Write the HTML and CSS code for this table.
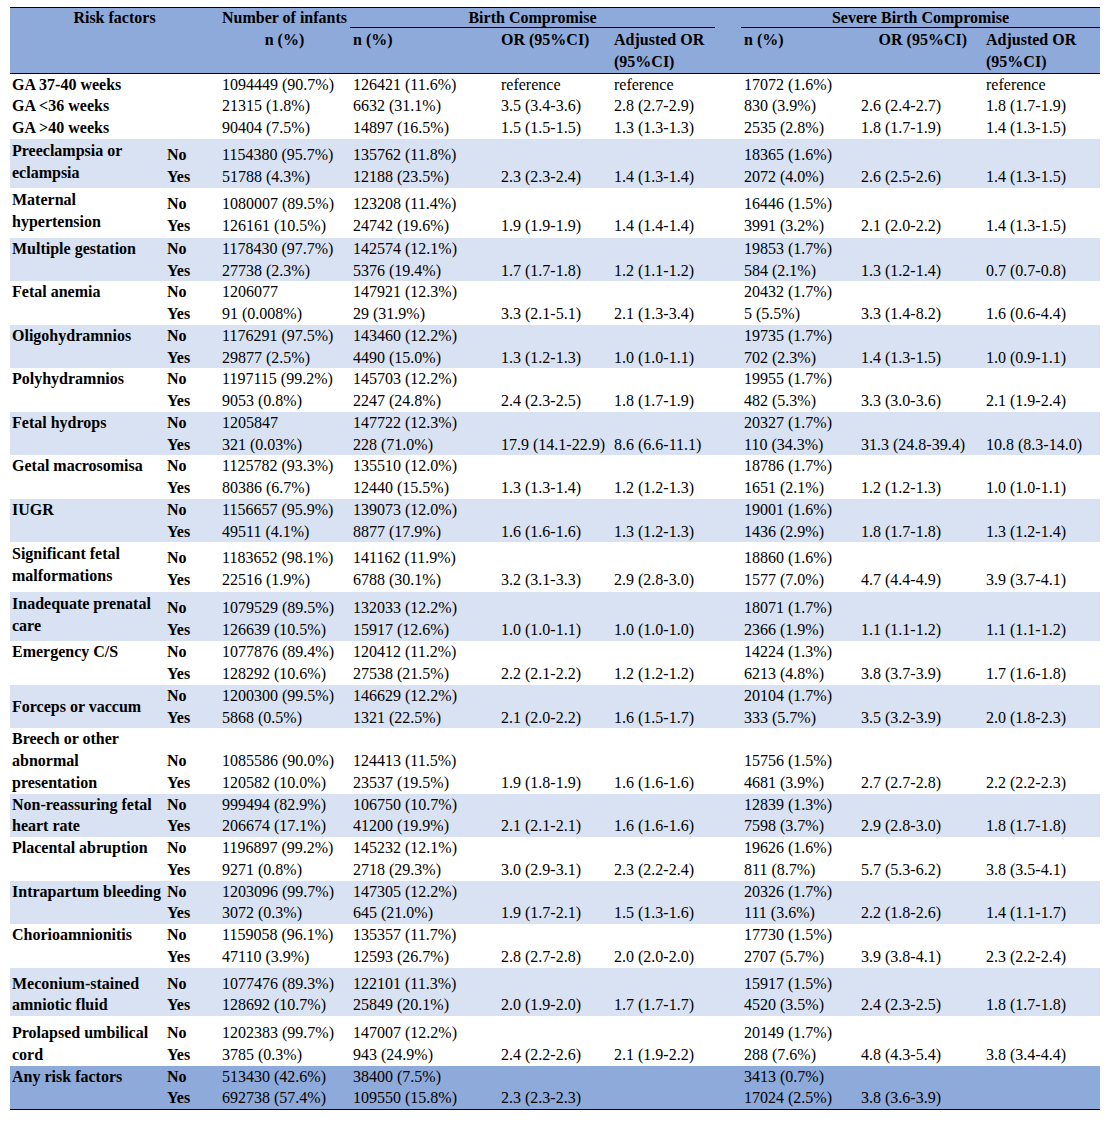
FILE: index.html
```html
<!DOCTYPE html>
<html lang="en">
<head>
<meta charset="utf-8">
<title>Risk factors and birth compromise</title>
<link rel="stylesheet" href="styles.css">
</head>
<body>
<table class="rt">
  <colgroup>
    <col class="c-label"><col class="c-ny"><col class="c-num"><col class="c-n"><col class="c-or"><col class="c-adj"><col class="c-gap"><col class="c-sn"><col class="c-sor"><col class="c-sadj">
  </colgroup>
  <thead>
    <tr class="h1">
      <th colspan="2" class="center">Risk factors</th>
      <th class="left">Number of infants</th>
      <th colspan="3" class="grp">Birth Compromise</th>
      <th></th>
      <th colspan="3" class="grp">Severe Birth Compromise</th>
    </tr>
    <tr class="h2">
      <th colspan="2"></th>
      <th class="center">n (%)</th>
      <th>n (%)</th>
      <th>OR (95%CI)</th>
      <th>Adjusted OR<br>(95%CI)</th>
      <th></th>
      <th>n (%)</th>
      <th class="right">OR (95%CI)</th>
      <th>Adjusted OR<br>(95%CI)</th>
    </tr>
  </thead>
  <tbody>
    <tr class="ga first">
      <td class="lbl">GA 37-40 weeks</td><td></td><td>1094449 (90.7%)</td><td>126421 (11.6%)</td><td>reference</td><td>reference</td><td></td><td>17072 (1.6%)</td><td></td><td>reference</td>
    </tr>
    <tr class="ga">
      <td class="lbl">GA &lt;36 weeks</td><td></td><td>21315 (1.8%)</td><td>6632 (31.1%)</td><td>3.5 (3.4-3.6)</td><td>2.8 (2.7-2.9)</td><td></td><td>830 (3.9%)</td><td>2.6 (2.4-2.7)</td><td>1.8 (1.7-1.9)</td>
    </tr>
    <tr class="ga last">
      <td class="lbl">GA &gt;40 weeks</td><td></td><td>90404 (7.5%)</td><td>14897 (16.5%)</td><td>1.5 (1.5-1.5)</td><td>1.3 (1.3-1.3)</td><td></td><td>2535 (2.8%)</td><td>1.8 (1.7-1.9)</td><td>1.4 (1.3-1.5)</td>
    </tr>

    <tr class="band tall">
      <td class="lbl">Preeclampsia or<br>eclampsia</td><td class="ny">No<br>Yes</td><td>1154380 (95.7%)<br>51788 (4.3%)</td><td>135762 (11.8%)<br>12188 (23.5%)</td><td><br>2.3 (2.3-2.4)</td><td><br>1.4 (1.3-1.4)</td><td></td><td>18365 (1.6%)<br>2072 (4.0%)</td><td><br>2.6 (2.5-2.6)</td><td><br>1.4 (1.3-1.5)</td>
    </tr>
    <tr class="tall">
      <td class="lbl">Maternal<br>hypertension</td><td class="ny">No<br>Yes</td><td>1080007 (89.5%)<br>126161 (10.5%)</td><td>123208 (11.4%)<br>24742 (19.6%)</td><td><br>1.9 (1.9-1.9)</td><td><br>1.4 (1.4-1.4)</td><td></td><td>16446 (1.5%)<br>3991 (3.2%)</td><td><br>2.1 (2.0-2.2)</td><td><br>1.4 (1.3-1.5)</td>
    </tr>
    <tr class="band">
      <td class="lbl">Multiple gestation</td><td class="ny">No<br>Yes</td><td>1178430 (97.7%)<br>27738 (2.3%)</td><td>142574 (12.1%)<br>5376 (19.4%)</td><td><br>1.7 (1.7-1.8)</td><td><br>1.2 (1.1-1.2)</td><td></td><td>19853 (1.7%)<br>584 (2.1%)</td><td><br>1.3 (1.2-1.4)</td><td><br>0.7 (0.7-0.8)</td>
    </tr>
    <tr>
      <td class="lbl">Fetal anemia</td><td class="ny">No<br>Yes</td><td>1206077<br>91 (0.008%)</td><td>147921 (12.3%)<br>29 (31.9%)</td><td><br>3.3 (2.1-5.1)</td><td><br>2.1 (1.3-3.4)</td><td></td><td>20432 (1.7%)<br>5 (5.5%)</td><td><br>3.3 (1.4-8.2)</td><td><br>1.6 (0.6-4.4)</td>
    </tr>
    <tr class="band">
      <td class="lbl">Oligohydramnios</td><td class="ny">No<br>Yes</td><td>1176291 (97.5%)<br>29877 (2.5%)</td><td>143460 (12.2%)<br>4490 (15.0%)</td><td><br>1.3 (1.2-1.3)</td><td><br>1.0 (1.0-1.1)</td><td></td><td>19735 (1.7%)<br>702 (2.3%)</td><td><br>1.4 (1.3-1.5)</td><td><br>1.0 (0.9-1.1)</td>
    </tr>
    <tr>
      <td class="lbl">Polyhydramnios</td><td class="ny">No<br>Yes</td><td>1197115 (99.2%)<br>9053 (0.8%)</td><td>145703 (12.2%)<br>2247 (24.8%)</td><td><br>2.4 (2.3-2.5)</td><td><br>1.8 (1.7-1.9)</td><td></td><td>19955 (1.7%)<br>482 (5.3%)</td><td><br>3.3 (3.0-3.6)</td><td><br>2.1 (1.9-2.4)</td>
    </tr>
    <tr class="band">
      <td class="lbl">Fetal hydrops</td><td class="ny">No<br>Yes</td><td>1205847<br>321 (0.03%)</td><td>147722 (12.3%)<br>228 (71.0%)</td><td><br>17.9 (14.1-22.9)</td><td><br>8.6 (6.6-11.1)</td><td></td><td>20327 (1.7%)<br>110 (34.3%)</td><td><br>31.3 (24.8-39.4)</td><td><br>10.8 (8.3-14.0)</td>
    </tr>
    <tr>
      <td class="lbl">Getal macrosomisa</td><td class="ny">No<br>Yes</td><td>1125782 (93.3%)<br>80386 (6.7%)</td><td>135510 (12.0%)<br>12440 (15.5%)</td><td><br>1.3 (1.3-1.4)</td><td><br>1.2 (1.2-1.3)</td><td></td><td>18786 (1.7%)<br>1651 (2.1%)</td><td><br>1.2 (1.2-1.3)</td><td><br>1.0 (1.0-1.1)</td>
    </tr>
    <tr class="band">
      <td class="lbl">IUGR</td><td class="ny">No<br>Yes</td><td>1156657 (95.9%)<br>49511 (4.1%)</td><td>139073 (12.0%)<br>8877 (17.9%)</td><td><br>1.6 (1.6-1.6)</td><td><br>1.3 (1.2-1.3)</td><td></td><td>19001 (1.6%)<br>1436 (2.9%)</td><td><br>1.8 (1.7-1.8)</td><td><br>1.3 (1.2-1.4)</td>
    </tr>
    <tr class="tall">
      <td class="lbl">Significant fetal<br>malformations</td><td class="ny">No<br>Yes</td><td>1183652 (98.1%)<br>22516 (1.9%)</td><td>141162 (11.9%)<br>6788 (30.1%)</td><td><br>3.2 (3.1-3.3)</td><td><br>2.9 (2.8-3.0)</td><td></td><td>18860 (1.6%)<br>1577 (7.0%)</td><td><br>4.7 (4.4-4.9)</td><td><br>3.9 (3.7-4.1)</td>
    </tr>
    <tr class="band tall">
      <td class="lbl">Inadequate prenatal<br>care</td><td class="ny">No<br>Yes</td><td>1079529 (89.5%)<br>126639 (10.5%)</td><td>132033 (12.2%)<br>15917 (12.6%)</td><td><br>1.0 (1.0-1.1)</td><td><br>1.0 (1.0-1.0)</td><td></td><td>18071 (1.7%)<br>2366 (1.9%)</td><td><br>1.1 (1.1-1.2)</td><td><br>1.1 (1.1-1.2)</td>
    </tr>
    <tr>
      <td class="lbl">Emergency C/S</td><td class="ny">No<br>Yes</td><td>1077876 (89.4%)<br>128292 (10.6%)</td><td>120412 (11.2%)<br>27538 (21.5%)</td><td><br>2.2 (2.1-2.2)</td><td><br>1.2 (1.2-1.2)</td><td></td><td>14224 (1.3%)<br>6213 (4.8%)</td><td><br>3.8 (3.7-3.9)</td><td><br>1.7 (1.6-1.8)</td>
    </tr>
    <tr class="band">
      <td class="lbl mid">Forceps or vaccum</td><td class="ny">No<br>Yes</td><td>1200300 (99.5%)<br>5868 (0.5%)</td><td>146629 (12.2%)<br>1321 (22.5%)</td><td><br>2.1 (2.0-2.2)</td><td><br>1.6 (1.5-1.7)</td><td></td><td>20104 (1.7%)<br>333 (5.7%)</td><td><br>3.5 (3.2-3.9)</td><td><br>2.0 (1.8-2.3)</td>
    </tr>
    <tr class="bottom">
      <td class="lbl">Breech or other<br>abnormal<br>presentation</td><td class="ny">No<br>Yes</td><td>1085586 (90.0%)<br>120582 (10.0%)</td><td>124413 (11.5%)<br>23537 (19.5%)</td><td><br>1.9 (1.8-1.9)</td><td><br>1.6 (1.6-1.6)</td><td></td><td>15756 (1.5%)<br>4681 (3.9%)</td><td><br>2.7 (2.7-2.8)</td><td><br>2.2 (2.2-2.3)</td>
    </tr>
    <tr class="band">
      <td class="lbl">Non-reassuring fetal<br>heart rate</td><td class="ny">No<br>Yes</td><td>999494 (82.9%)<br>206674 (17.1%)</td><td>106750 (10.7%)<br>41200 (19.9%)</td><td><br>2.1 (2.1-2.1)</td><td><br>1.6 (1.6-1.6)</td><td></td><td>12839 (1.3%)<br>7598 (3.7%)</td><td><br>2.9 (2.8-3.0)</td><td><br>1.8 (1.7-1.8)</td>
    </tr>
    <tr>
      <td class="lbl">Placental abruption</td><td class="ny">No<br>Yes</td><td>1196897 (99.2%)<br>9271 (0.8%)</td><td>145232 (12.1%)<br>2718 (29.3%)</td><td><br>3.0 (2.9-3.1)</td><td><br>2.3 (2.2-2.4)</td><td></td><td>19626 (1.6%)<br>811 (8.7%)</td><td><br>5.7 (5.3-6.2)</td><td><br>3.8 (3.5-4.1)</td>
    </tr>
    <tr class="band">
      <td class="lbl">Intrapartum bleeding</td><td class="ny">No<br>Yes</td><td>1203096 (99.7%)<br>3072 (0.3%)</td><td>147305 (12.2%)<br>645 (21.0%)</td><td><br>1.9 (1.7-2.1)</td><td><br>1.5 (1.3-1.6)</td><td></td><td>20326 (1.7%)<br>111 (3.6%)</td><td><br>2.2 (1.8-2.6)</td><td><br>1.4 (1.1-1.7)</td>
    </tr>
    <tr>
      <td class="lbl">Chorioamnionitis</td><td class="ny">No<br>Yes</td><td>1159058 (96.1%)<br>47110 (3.9%)</td><td>135357 (11.7%)<br>12593 (26.7%)</td><td><br>2.8 (2.7-2.8)</td><td><br>2.0 (2.0-2.0)</td><td></td><td>17730 (1.5%)<br>2707 (5.7%)</td><td><br>3.9 (3.8-4.1)</td><td><br>2.3 (2.2-2.4)</td>
    </tr>
    <tr class="band even">
      <td class="lbl">Meconium-stained<br>amniotic fluid</td><td class="ny">No<br>Yes</td><td>1077476 (89.3%)<br>128692 (10.7%)</td><td>122101 (11.3%)<br>25849 (20.1%)</td><td><br>2.0 (1.9-2.0)</td><td><br>1.7 (1.7-1.7)</td><td></td><td>15917 (1.5%)<br>4520 (3.5%)</td><td><br>2.4 (2.3-2.5)</td><td><br>1.8 (1.7-1.8)</td>
    </tr>
    <tr class="even deep">
      <td class="lbl">Prolapsed umbilical<br>cord</td><td class="ny">No<br>Yes</td><td>1202383 (99.7%)<br>3785 (0.3%)</td><td>147007 (12.2%)<br>943 (24.9%)</td><td><br>2.4 (2.2-2.6)</td><td><br>2.1 (1.9-2.2)</td><td></td><td>20149 (1.7%)<br>288 (7.6%)</td><td><br>4.8 (4.3-5.4)</td><td><br>3.8 (3.4-4.4)</td>
    </tr>
    <tr class="total">
      <td class="lbl">Any risk factors</td><td class="ny">No<br>Yes</td><td>513430 (42.6%)<br>692738 (57.4%)</td><td>38400 (7.5%)<br>109550 (15.8%)</td><td><br>2.3 (2.3-2.3)</td><td></td><td></td><td>3413 (0.7%)<br>17024 (2.5%)</td><td><br>3.8 (3.6-3.9)</td><td></td>
    </tr>
  </tbody>
</table>
</body>
</html>
```

FILE: styles.css
```css
html, body {
  margin: 0;
  padding: 0;
  background: #ffffff;
}

body {
  padding: 7px 8px 0 10px;
  font-family: "Liberation Serif", "Times New Roman", serif;
  font-size: 16px;
  color: #000;
}

.rt {
  width: 1090px;
  table-layout: fixed;
  border-collapse: collapse;
  border-top: 1px solid #000;
  border-bottom: 1px solid #000;
  line-height: 21.75px;
}

.c-label { width: 155px; }
.c-ny { width: 54px; }
.c-num { width: 131px; }
.c-n { width: 148px; }
.c-or { width: 113px; }
.c-adj { width: 104px; }
.c-gap { width: 26px; }
.c-sn { width: 117px; }
.c-sor { width: 125px; }
.c-sadj { width: 117px; }

.rt th,
.rt td {
  padding: 0 0 0 3px;
  text-align: left;
  vertical-align: top;
  white-space: nowrap;
  overflow: visible;
}

.rt thead tr {
  background: #8eaadb;
}

.rt thead th {
  font-weight: bold;
}

.rt thead tr.h1 th {
  line-height: 19px;
  padding-top: 0;
  padding-bottom: 0;
}

.rt thead tr.h2 th {
  border-bottom: 1px solid #000;
  padding-top: 1px;
  padding-bottom: 0;
}

.rt th.center { text-align: center; padding-left: 0; }
.rt th.right { text-align: right; padding-right: 16px; }
.rt th.grp {
  text-align: center;
  padding-left: 0;
  border-bottom: 1px solid #000;
}

.rt td.lbl,
.rt td.ny {
  font-weight: bold;
  padding-left: 2px;
}

.rt tbody tr.band {
  background: #d9e2f3;
}

.rt tbody tr.total {
  background: #8eaadb;
}

.rt td.mid {
  vertical-align: middle;
}

.rt tr.tall td {
  padding-top: 5px;
  padding-bottom: 1px;
}

.rt tr.tall td.lbl {
  padding-top: 1px;
  padding-bottom: 5px;
}

.rt tr.even td,
.rt tr.even td.lbl {
  padding-top: 5px;
  padding-bottom: 0;
}

.rt tr.even.deep td,
.rt tr.even.deep td.lbl {
  padding-top: 6px;
}

.rt tr.bottom td {
  vertical-align: bottom;
}

.rt tr.bottom td.lbl {
  vertical-align: top;
}

.rt tr.ga.first td { padding-top: 0; }
```
